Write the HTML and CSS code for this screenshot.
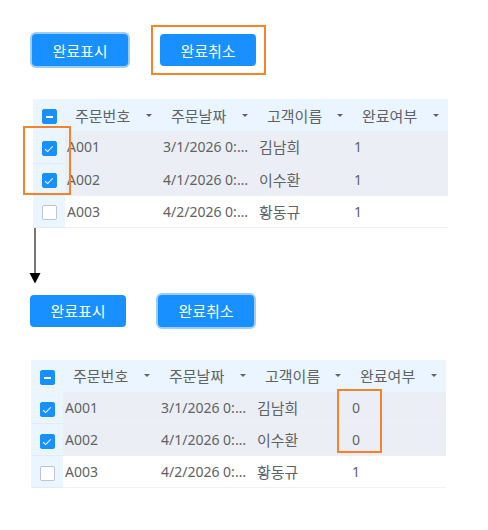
FILE: index.html
```html
<!DOCTYPE html>
<html>
<head lang="ko">
    <meta charset="UTF-8">
    <title>완료표시 / 완료취소</title>
    <link rel="stylesheet" href="styles.css">
</head>
<body>
<div id="page">
    <div class="demo demo-before">
        <div class="btns">
            <span class="btn focus">완료표시</span>
            <span class="btn">완료취소</span>
        </div>
        <table class="grid">
            <colgroup>
                <col class="c-chk"><col class="c-w"><col class="c-w"><col class="c-w2"><col class="c-w">
            </colgroup>
            <thead>
            <tr>
                <th class="chk"><i class="cb part"></i></th>
                <th><div class="hd"><span>주문번호</span><b class="sort"></b></div></th>
                <th><div class="hd"><span>주문날짜</span><b class="sort"></b></div></th>
                <th><div class="hd"><span>고객이름</span><b class="sort"></b></div></th>
                <th><div class="hd"><span>완료여부</span><b class="sort"></b></div></th>
            </tr>
            </thead>
            <tbody>
            <tr class="sel">
                <td class="chk"><i class="cb on"></i></td>
                <td>A001</td><td>3/1/2026 0:00:00</td><td class="ko">김남희</td><td>1</td>
            </tr>
            <tr class="sel">
                <td class="chk"><i class="cb on"></i></td>
                <td>A002</td><td>4/1/2026 0:00:00</td><td class="ko">이수환</td><td>1</td>
            </tr>
            <tr>
                <td class="chk"><i class="cb"></i></td>
                <td>A003</td><td>4/2/2026 0:00:00</td><td class="ko">황동규</td><td>1</td>
            </tr>
            </tbody>
        </table>
    </div>

    <svg class="arrow" width="12" height="56" viewBox="0 0 12 56">
        <line x1="6" y1="0" x2="6" y2="47" stroke="#777" stroke-width="2"/>
        <polygon points="0.5,45 11.5,45 6,55.5" fill="#000"/>
    </svg>

    <div class="demo demo-after">
        <div class="btns">
            <span class="btn">완료표시</span>
            <span class="btn focus">완료취소</span>
        </div>
        <table class="grid">
            <colgroup>
                <col class="c-chk"><col class="c-w"><col class="c-w"><col class="c-w2"><col class="c-w">
            </colgroup>
            <thead>
            <tr>
                <th class="chk"><i class="cb part"></i></th>
                <th><div class="hd"><span>주문번호</span><b class="sort"></b></div></th>
                <th><div class="hd"><span>주문날짜</span><b class="sort"></b></div></th>
                <th><div class="hd"><span>고객이름</span><b class="sort"></b></div></th>
                <th><div class="hd"><span>완료여부</span><b class="sort"></b></div></th>
            </tr>
            </thead>
            <tbody>
            <tr class="sel">
                <td class="chk"><i class="cb on"></i></td>
                <td>A001</td><td>3/1/2026 0:00:00</td><td class="ko">김남희</td><td>0</td>
            </tr>
            <tr class="sel">
                <td class="chk"><i class="cb on"></i></td>
                <td>A002</td><td>4/1/2026 0:00:00</td><td class="ko">이수환</td><td>0</td>
            </tr>
            <tr>
                <td class="chk"><i class="cb"></i></td>
                <td>A003</td><td>4/2/2026 0:00:00</td><td class="ko">황동규</td><td>1</td>
            </tr>
            </tbody>
        </table>
    </div>

    <div class="mark mark-btn"></div>
    <div class="mark mark-chk"></div>
    <div class="mark mark-val"></div>
</div>
</body>
</html>
```

FILE: styles.css
```css
*{
    margin: 0;
    padding: 0;
    box-sizing: border-box;
}
body{
    background: #fff;
    font-family: "Noto Sans", "Noto Sans CJK KR", sans-serif;
    font-size: 14px;
    color: #606266;
}
#page{
    position: relative;
    width: 488px;
    height: 530px;
}
.demo-before{
    padding: 34px 0 0 32px;
}
.demo-before .grid{
    margin: 33px 0 0 1px;
}
.demo-after{
    padding: 0 0 0 30px;
}
.demo-after .grid{
    margin: 33px 0 0 1px;
}
.btns{
    display: flex;
    gap: 32px;
}
.btn{
    width: 96px;
    height: 32px;
    border-radius: 4px;
    background: #1890ff;
    color: #fff;
    font-family: "Noto Sans CJK KR", sans-serif;
    font-size: 15px;
    display: flex;
    align-items: center;
    justify-content: center;
}
.btn.focus{
    box-shadow: 0 0 0 2px #9dcdfd;
}
.arrow{
    display: block;
    margin: 0 0 11px 29px;
}

/* grid */
.grid{
    width: 415px;
    table-layout: fixed;
    border-collapse: collapse;
}
.c-chk{ width: 32px; }
.c-w{ width: 96px; }
.c-w2{ width: 95px; }
.grid th,
.grid td{
    height: 32px;
    font-weight: normal;
    text-align: left;
    white-space: nowrap;
    overflow: hidden;
    text-overflow: ellipsis;
    font-family: "Noto Sans", "Noto Sans CJK KR", sans-serif;
    color: #606266;
}
.grid thead tr{
    background: #eaf5ff;
}
.grid td{
    padding: 0 6px 0 2px;
    border-bottom: 1px solid #eef0f4;
}
.grid td.ko{
    font-family: "Noto Sans CJK KR", sans-serif;
    font-size: 15px;
}
.grid tbody tr.sel{
    background: #ebeff5;
}
.grid .chk{
    background: #eaf5ff;
    padding: 0;
    text-align: center;
    border-bottom-color: #e0ecf8;
}
.hd{
    display: flex;
    align-items: center;
    justify-content: space-between;
    padding: 0 9px 0 10px;
    font-family: "Noto Sans CJK KR", sans-serif;
    font-size: 15px;
}
.sort{
    width: 0;
    height: 0;
    border-left: 3px solid transparent;
    border-right: 3px solid transparent;
    border-top: 3px solid #606266;
}

/* checkbox */
.cb{
    display: inline-block;
    vertical-align: middle;
    position: relative;
    width: 15px;
    height: 15px;
    border: 1px solid #c0c4cc;
    border-radius: 2px;
    background: #fff;
}
.cb.on,
.cb.part{
    background: #1890ff;
    border-color: #1890ff;
}
.cb.on::after{
    content: "";
    position: absolute;
    left: 4px;
    top: 2px;
    width: 3px;
    height: 7px;
    border: solid #fff;
    border-width: 0 1.5px 1.5px 0;
    transform: rotate(45deg);
}
.cb.part::after{
    content: "";
    position: absolute;
    left: 3px;
    right: 3px;
    top: 6px;
    height: 2px;
    background: #fff;
}

/* annotation boxes */
.mark{
    position: absolute;
    border: 2px solid #f5832a;
}
.mark-btn{
    left: 151px;
    top: 25px;
    width: 115px;
    height: 50px;
}
.mark-chk{
    left: 23px;
    top: 126px;
    width: 48px;
    height: 69px;
}
.mark-val{
    left: 337px;
    top: 389px;
    width: 45px;
    height: 64px;
}
```
